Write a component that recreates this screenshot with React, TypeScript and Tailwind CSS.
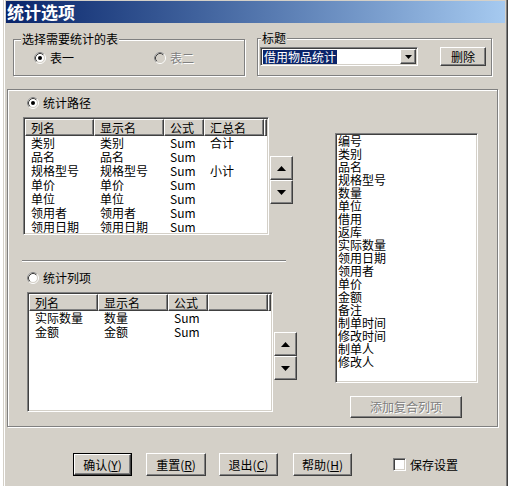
import React from 'react';

// classic Windows 2000 bevels
const raised =
  'bg-[#d4d0c8] border border-t-white border-l-white border-r-[#404040] border-b-[#404040] shadow-[inset_-1px_-1px_0_#808080]';
const sunken =
  'border border-t-[#808080] border-l-[#808080] border-r-white border-b-white shadow-[inset_1px_1px_0_#404040,inset_-1px_-1px_0_#d4d0c8]';
const etched = 'border border-[#808080] shadow-[inset_1px_1px_0_#fff,1px_1px_0_#fff]';

const Radio: React.FC<{ checked?: boolean; disabled?: boolean }> = ({ checked = false, disabled = false }) => (
  <svg width="12" height="12" viewBox="0 0 12 12" className="shrink-0">
    <circle cx="6" cy="6" r="5.5" fill="none" stroke="#fff" />
    <path d="M2.11 9.89A5.5 5.5 0 0 1 9.89 2.11" fill="none" stroke="#808080" />
    <circle cx="6" cy="6" r="4.5" fill={disabled ? '#d4d0c8' : '#fff'} stroke="#d4d0c8" />
    <path d="M2.82 9.18A4.5 4.5 0 0 1 9.18 2.82" fill="none" stroke="#404040" />
    {checked && <circle cx="6" cy="6" r="2" fill="#000" />}
  </svg>
);

const ArrowBtn: React.FC<{ up?: boolean }> = ({ up = false }) => (
  <div className={`w-[23px] h-[24px] flex items-center justify-center ${raised}`}>
    <svg width="9" height="5" viewBox="0 0 9 5">
      <path d={up ? 'M4.5 0L9 5H0Z' : 'M0 0H9L4.5 5Z'} fill="#000" />
    </svg>
  </div>
);

const colW = ['w-[69px]', 'w-[70px]', 'w-[40px]', 'w-[60px]'];

interface GridProps {
  headers: string[];
  rows: string[][];
  box: string;
}

const Grid: React.FC<GridProps> = ({ headers, rows, box }) => (
  <div className={`${box} ${sunken} bg-white p-[1px] flex flex-col overflow-hidden`}>
    <div className="flex h-[17px] shrink-0">
      {headers.map((h, i) => (
        <div key={i} className={`${colW[i]} shrink-0 h-full pl-[5px] leading-[15px] ${raised}`}>
          {h}
        </div>
      ))}
      <div className={`flex-1 h-full ${raised}`} />
    </div>
    {rows.map((r, i) => (
      <div key={i} className="flex h-[14px] leading-[14px]">
        {r.map((c, j) => (
          <div key={j} className={`${colW[j]} shrink-0 pl-[6px] whitespace-nowrap`}>
            {c}
          </div>
        ))}
      </div>
    ))}
  </div>
);

const Btn: React.FC<{ children: React.ReactNode; cls: string; def?: boolean }> = ({ children, cls, def }) =>
  def ? (
    <div className={`${cls} border border-black flex`}>
      <div className={`flex-1 flex items-center justify-center ${raised}`}>{children}</div>
    </div>
  ) : (
    <div className={`${cls} flex items-center justify-center ${raised}`}>{children}</div>
  );

const pathRows = [
  ['类别', '类别', 'Sum', '合计'],
  ['品名', '品名', 'Sum', ''],
  ['规格型号', '规格型号', 'Sum', '小计'],
  ['单价', '单价', 'Sum', ''],
  ['单位', '单位', 'Sum', ''],
  ['领用者', '领用者', 'Sum', ''],
  ['领用日期', '领用日期', 'Sum', ''],
];

const colRows = [
  ['实际数量', '数量', 'Sum', ''],
  ['金额', '金额', 'Sum', ''],
];

const fields = [
  '编号', '类别', '品名', '规格型号', '数量', '单位', '借用', '返库', '实际数量',
  '领用日期', '领用者', '单价', '金额', '备注', '制单时间', '修改时间', '制单人', '修改人',
];

export default function App() {
  return (
    <div className="w-[511px] h-[486px] bg-white flex overflow-hidden text-[12px] text-black font-['Noto_Sans_CJK_SC',sans-serif]">
      <div className="ml-[3px] w-[505px] h-[486px] shrink-0 bg-[#d4d0c8] border-l border-l-[#d4d0c8] border-r border-r-[#404040] shadow-[inset_1px_0_0_#fff,inset_-1px_0_0_#808080] px-[2px] pt-[1px] flex flex-col">
        {/* title bar */}
        <div className="h-[22px] shrink-0 bg-gradient-to-r from-[#0a246a] to-[#a6caf0] flex items-center pl-[1px]">
          <span className="text-white font-bold text-[17px] leading-[18px]">统计选项</span>
        </div>

        {/* top groups */}
        <div className="flex items-start mt-[15px]">
          <div className={`relative ml-[7px] mt-[1px] w-[232px] h-[37px] ${etched}`}>
            <span className="absolute -top-[8px] left-[7px] px-[1px] bg-[#d4d0c8] leading-[14px]">选择需要统计的表</span>
            <div className="flex items-center h-[14px] mt-[11px] pl-[20px]">
              <div className="flex items-center gap-[4px] w-[120px]">
                <Radio checked />
                <span className="leading-[14px]">表一</span>
              </div>
              <div className="flex items-center gap-[4px]">
                <Radio disabled />
                <span className="leading-[14px] text-[#808080] [text-shadow:1px_1px_0_#fff]">表二</span>
              </div>
            </div>
          </div>

          <div className={`relative ml-[12px] w-[235px] h-[38px] ${etched}`}>
            <span className="absolute -top-[8px] left-[3px] px-[1px] bg-[#d4d0c8] leading-[14px]">标题</span>
            <div className="flex items-start mt-[8px] ml-[2px]">
              <div className={`w-[158px] h-[19px] bg-white p-[1px] flex items-center ${sunken}`}>
                <span className="ml-[1px] h-[14px] leading-[14px] px-[1px] bg-[#0a246a] text-white">借用物品统计</span>
                <div className="flex-1" />
                <div className={`w-[16px] h-full flex items-center justify-center ${raised}`}>
                  <svg width="7" height="4" viewBox="0 0 7 4">
                    <path d="M0 0H7L3.5 4Z" fill="#000" />
                  </svg>
                </div>
              </div>
              <Btn cls="ml-[22px] w-[46px] h-[19px]">删除</Btn>
            </div>
          </div>
        </div>

        {/* main frame */}
        <div className={`mt-[13px] ml-[1px] w-[491px] h-[338px] shrink-0 flex ${etched}`}>
          <div className="w-[327px] shrink-0 flex flex-col">
            <div className="flex items-center gap-[4px] h-[14px] mt-[6px] pl-[19px]">
              <Radio checked />
              <span className="leading-[14px]">统计路径</span>
            </div>
            <div className="flex items-start mt-[7px] pl-[15px]">
              <Grid headers={['列名', '显示名', '公式', '汇总名']} rows={pathRows} box="w-[246px] h-[118px]" />
              <div className="flex flex-col ml-[1px] mt-[39px]">
                <ArrowBtn up />
                <ArrowBtn />
              </div>
            </div>
            <div className="mt-[25px] ml-[14px] w-[264px] h-[2px] border-t border-t-[#808080] border-b border-b-white" />
            <div className="flex items-center gap-[4px] h-[14px] mt-[9px] pl-[19px]">
              <Radio />
              <span className="leading-[14px]">统计列项</span>
            </div>
            <div className="flex items-start mt-[7px] pl-[19px]">
              <Grid headers={['列名', '显示名', '公式', '']} rows={colRows} box="w-[246px] h-[120px]" />
              <div className="flex flex-col ml-[1px] mt-[40px]">
                <ArrowBtn up />
                <ArrowBtn />
              </div>
            </div>
          </div>

          <div className="flex flex-col">
            <div className={`mt-[43px] w-[143px] h-[250px] bg-white p-[1px] overflow-hidden ${sunken}`}>
              <div className="-mt-[1px] pl-[1px]">
                {fields.map((f) => (
                  <div key={f} className="h-[13px] leading-[13px] whitespace-nowrap">
                    {f}
                  </div>
                ))}
              </div>
            </div>
            <Btn cls="mt-[13px] ml-[15px] w-[112px] h-[22px]">
              <span className="text-[#808080] [text-shadow:1px_1px_0_#fff]">添加复合列项</span>
            </Btn>
          </div>
        </div>

        {/* bottom buttons */}
        <div className="flex items-center mt-[26px] pl-[67px]">
          <Btn def cls="w-[59px] h-[23px]">
            <span>
              确认(<span className="underline">Y</span>)
            </span>
          </Btn>
          <Btn cls="ml-[14px] w-[60px] h-[23px]">
            <span>
              重置(<span className="underline">R</span>)
            </span>
          </Btn>
          <Btn cls="ml-[13px] w-[59px] h-[23px]">
            <span>
              退出(<span className="underline">C</span>)
            </span>
          </Btn>
          <Btn cls="ml-[15px] w-[59px] h-[23px]">
            <span>
              帮助(<span className="underline">H</span>)
            </span>
          </Btn>
          <div className={`ml-[41px] w-[13px] h-[13px] bg-white ${sunken}`} />
          <span className="ml-[4px] leading-[14px]">保存设置</span>
        </div>
      </div>
    </div>
  );
}
